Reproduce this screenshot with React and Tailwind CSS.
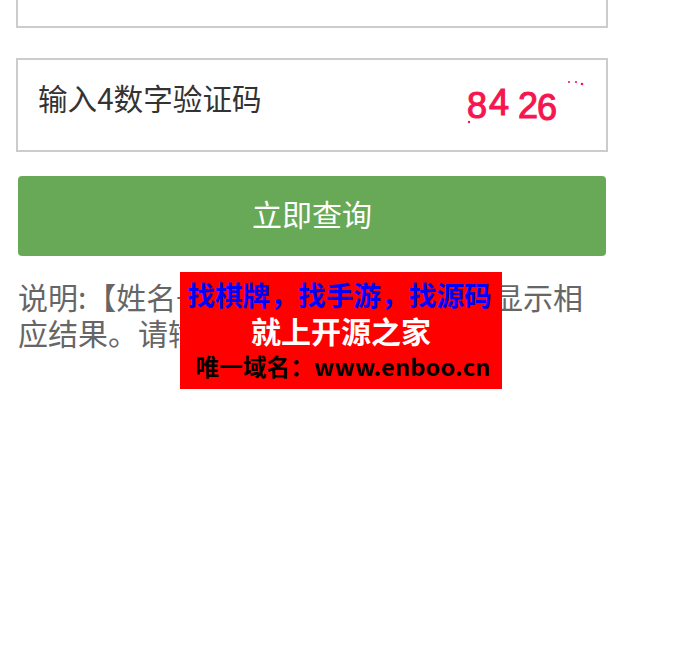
import React from 'react'

const cjk = { fontFamily: '"Noto Sans CJK SC", "Noto Sans", sans-serif' }

function Captcha() {
  return (
    <svg width="120" height="60" viewBox="0 0 120 60" className="shrink-0">
      <g fill="#f5164f" stroke="#f5164f" strokeWidth="1.1" fontFamily="Liberation Sans, sans-serif" fontSize="36">
        <text x="1" y="38">8</text>
        <text x="23" y="35">4</text>
        <text x="52" y="38">2</text>
        <text x="71" y="40">6</text>
      </g>
      <circle cx="3" cy="42" r="1.2" fill="#f5164f" />
      <circle cx="103" cy="2" r="1.1" fill="#f5164f" />
      <circle cx="110" cy="2" r="1.1" fill="#f5164f" />
      <circle cx="116" cy="4" r="1.3" fill="#f5164f" />
    </svg>
  )
}

export default function App() {
  return (
    <div className="relative h-[662px] w-[682px] overflow-hidden bg-white" style={cjk}>
      <div className="w-[608px] pl-4">
        <div className="h-7 border-2 border-t-0 border-[#ccc] bg-white" />

        <div className="mt-[30px] flex h-[94px] items-start justify-between border-2 border-[#ccc] bg-white pl-5 pr-5">
          <span className="mt-[18px] text-[29.6px] leading-[40px] text-[#333]">输入4数字验证码</span>
          <div className="mt-5">
            <Captcha />
          </div>
        </div>

        <button className="ml-0.5 mt-6 flex h-20 w-[588px] items-center justify-center rounded-[4px] bg-[#68a958] pb-1.5 text-[30px] text-white">
          立即查询
        </button>

        <p className="ml-0.5 mt-[22px] w-[572px] text-[30px] leading-[36px] text-[#666]">
          说明:【姓名+身份证号】都正确才会显示相应结果。请输入正确的信息
        </p>
      </div>

      <div className="absolute left-[180px] top-[272px] flex h-[117px] w-[322px] flex-col items-center bg-[#ff0000] font-bold">
        <span className="mt-[3px] whitespace-nowrap pr-[3px] text-[27.7px] leading-[38px] text-[#0000ff]">{'找棋牌\uFF0C找手游\uFF0C找源码'}</span>
        <span className="-mt-0.5 whitespace-nowrap text-[30px] leading-[38px] text-white">就上开源之家</span>
        <span className="-mt-0.5 whitespace-nowrap pl-1 text-[23.5px] leading-[38px] tracking-[0.2px] text-black">{'唯一域名\uFF1Awww.enboo.cn'}</span>
      </div>
    </div>
  )
}
